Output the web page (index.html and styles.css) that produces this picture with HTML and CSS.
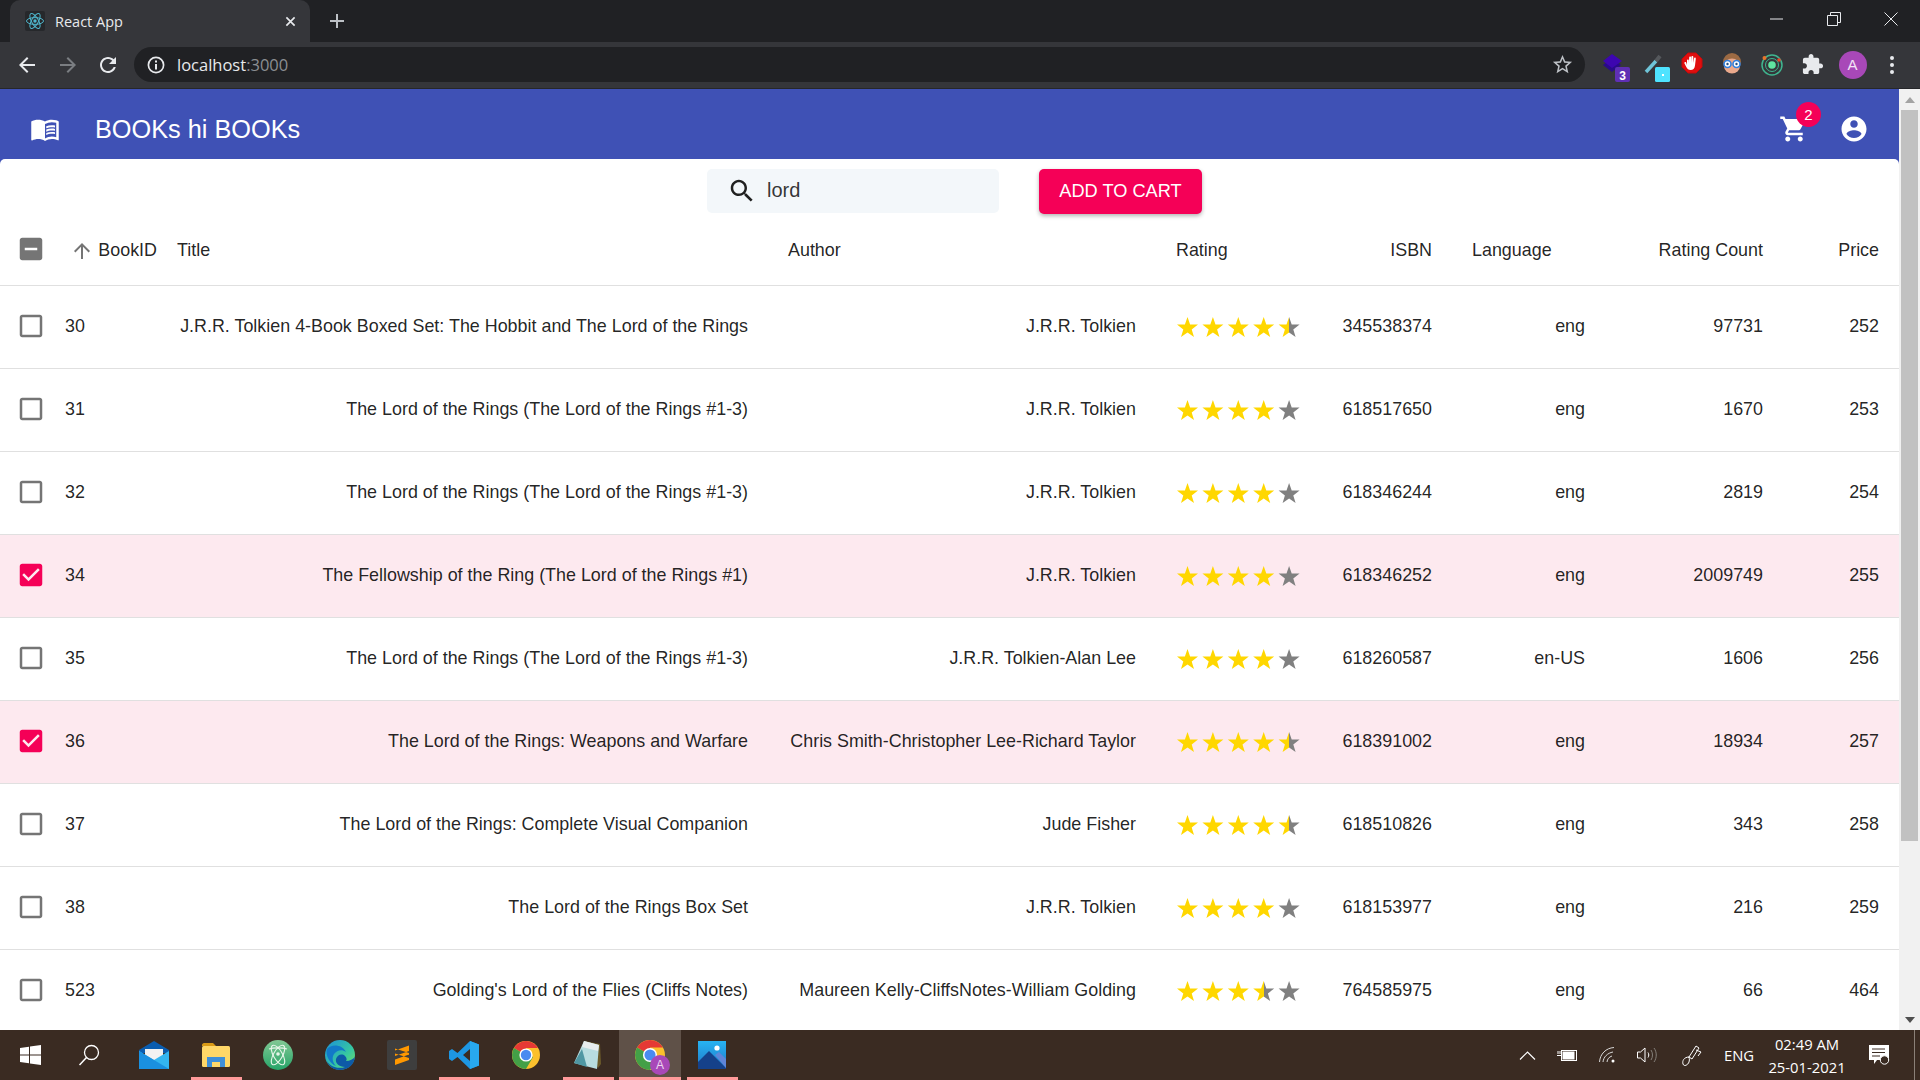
FILE: index.html
```html
<!DOCTYPE html>
<html lang="en">
<head>
  <meta charset="UTF-8" />
  <title>React App</title>
  <link rel="stylesheet" href="styles.css">
</head>
<body>
  <!-- shared svg pieces -->
  <svg class="svg-defs" aria-hidden="true">
    <defs>
      <linearGradient id="halfGold"><stop offset="50%" stop-color="#ffd700"/><stop offset="50%" stop-color="#808080"/></linearGradient>
      <polygon id="star" points="10.5,0 13.1,7.4 21,7.6 14.7,12.4 17,20 10.5,15.5 4,20 6.3,12.4 0,7.6 7.9,7.4"/>
      <g id="stars4">
        <use href="#star" fill="#ffd700"/><use href="#star" x="25.4" fill="#ffd700"/><use href="#star" x="50.8" fill="#ffd700"/><use href="#star" x="76.2" fill="#ffd700"/><use href="#star" x="101.6" fill="#808080"/>
      </g>
      <g id="stars45">
        <use href="#star" fill="#ffd700"/><use href="#star" x="25.4" fill="#ffd700"/><use href="#star" x="50.8" fill="#ffd700"/><use href="#star" x="76.2" fill="#ffd700"/><use href="#star" x="101.6" fill="url(#halfGold)"/>
      </g>
      <g id="stars35">
        <use href="#star" fill="#ffd700"/><use href="#star" x="25.4" fill="#ffd700"/><use href="#star" x="50.8" fill="#ffd700"/><use href="#star" x="76.2" fill="url(#halfGold)"/><use href="#star" x="101.6" fill="#808080"/>
      </g>
      <path id="boxEmpty" d="M19 5v14H5V5h14m0-2H5c-1.1 0-2 .9-2 2v14c0 1.1.9 2 2 2h14c1.1 0 2-.9 2-2V5c0-1.1-.9-2-2-2z"/>
      <path id="boxChecked" d="M19 3H5c-1.11 0-2 .9-2 2v14c0 1.1.89 2 2 2h14c1.11 0 2-.9 2-2V5c0-1.1-.89-2-2-2zm-9 14l-5-5 1.41-1.41L10 14.17l7.59-7.59L19 8l-9 9z"/>
      <g id="chromeLogo">
        <circle cx="14" cy="14" r="14" fill="#fbc02d"/>
        <path d="M14 14 1.9 7A14 14 0 0 1 26.1 7H14z" fill="#e53935"/>
        <path d="M14 14 1.9 7A14 14 0 0 0 14 28l7-12z" fill="#43a047"/>
        <circle cx="14" cy="14" r="6.6" fill="#fff"/>
        <circle cx="14" cy="14" r="5.2" fill="#4a8bf0"/>
      </g>
    </defs>
  </svg>

  <!-- browser window top -->
  <div class="tab-strip">
    <div class="tab">
      <svg class="favicon" viewBox="0 0 20 20">
        <rect width="20" height="20" rx="2" fill="#26282b"/>
        <g fill="none" stroke="#4fb6cc" stroke-width="1">
          <ellipse cx="10" cy="10" rx="8.5" ry="3.4"/>
          <ellipse cx="10" cy="10" rx="8.5" ry="3.4" transform="rotate(60 10 10)"/>
          <ellipse cx="10" cy="10" rx="8.5" ry="3.4" transform="rotate(120 10 10)"/>
        </g>
        <circle cx="10" cy="10" r="1.7" fill="#4fb6cc"/>
      </svg>
      <span class="tab-title">React App</span>
      <svg class="tab-close" viewBox="0 0 12 12"><path d="M1.5 1.5l9 9M10.5 1.5l-9 9" stroke="#e8eaed" stroke-width="1.8"/></svg>
    </div>
    <svg class="new-tab" viewBox="0 0 16 16"><path d="M8 1v14M1 8h14" stroke="#bdc1c6" stroke-width="2"/></svg>
    <div class="window-controls">
      <div class="window-btn"><svg viewBox="0 0 14 14"><path d="M0 7h13" stroke="#e8eaed" stroke-width="1"/></svg></div>
      <div class="window-btn"><svg viewBox="0 0 14 14"><path d="M.5 3.5h10v10H.5zM3.5 3.5v-3h10v10h-3" fill="none" stroke="#e8eaed" stroke-width="1"/></svg></div>
      <div class="window-btn"><svg viewBox="0 0 14 14"><path d="M.5.5l13 13M13.5.5l-13 13" stroke="#e8eaed" stroke-width="1"/></svg></div>
    </div>
  </div>

  <div class="browser-bar">
    <div class="nav-btn"><svg viewBox="0 0 24 24"><path fill="#e8eaed" d="M20 11H7.83l5.59-5.59L12 4l-8 8 8 8 1.41-1.41L7.83 13H20v-2z"/></svg></div>
    <div class="nav-btn"><svg viewBox="0 0 24 24"><path fill="#7b7e82" d="M4 11h12.17l-5.59-5.59L12 4l8 8-8 8-1.41-1.41L16.17 13H4v-2z"/></svg></div>
    <div class="nav-btn"><svg viewBox="0 0 24 24"><path fill="#e8eaed" d="M17.65 6.35C16.2 4.9 14.21 4 12 4c-4.42 0-7.99 3.58-7.99 8s3.57 8 7.99 8c3.73 0 6.84-2.55 7.73-6h-2.08c-.82 2.33-3.04 4-5.65 4-3.31 0-6-2.69-6-6s2.69-6 6-6c1.66 0 3.14.69 4.22 1.78L13 11h7V4l-2.35 2.35z"/></svg></div>
    <div class="url-bar">
      <svg class="url-info" viewBox="0 0 18 18"><circle cx="9" cy="9" r="7.6" fill="none" stroke="#e8eaed" stroke-width="1.7"/><path d="M8 8h2v5.5H8zM8 4.6h2v2H8z" fill="#e8eaed"/></svg>
      <span class="url-host">localhost</span><span class="url-port">:3000</span>
      <svg class="url-star" viewBox="0 0 24 24"><path fill="#bdc1c6" d="M22 9.24l-7.19-.62L12 2 9.19 8.63 2 9.24l5.46 4.73L5.82 21 12 17.27 18.18 21l-1.64-7.03L22 9.24zM12 15.4l-3.76 2.27 1-4.28-3.32-2.88 4.38-.38L12 6.1l1.71 4.04 4.38.38-3.32 2.88 1 4.28L12 15.4z"/></svg>
    </div>
    <div class="ext-btn">
      <svg viewBox="0 0 40 40">
        <path d="M11 20l9-7 9 7-9 7z" fill="#2a0a8a"/>
        <path d="M11 16l9-7 10 7-10 7z" fill="#3d06b0"/>
        <rect x="23" y="22" width="15" height="15" rx="2" fill="#5f2fb5"/>
        <text x="30.5" y="34.5" class="ext-count">3</text>
      </svg>
    </div>
    <div class="ext-btn">
      <svg viewBox="0 0 40 40">
        <path d="M14 27l10-11" stroke="#6fc4d8" stroke-width="3.5"/>
        <path d="M24 16l4-5" stroke="#55585c" stroke-width="4"/>
        <rect x="23" y="22" width="15" height="15" rx="1.5" fill="#4fe3ff"/>
        <rect x="30" y="29" width="2" height="2" fill="#fff"/>
      </svg>
    </div>
    <div class="ext-btn">
      <svg viewBox="0 0 40 40">
        <polygon points="16,8 24,8 30,14 30,22 24,28 16,28 10,22 10,14" fill="#e00e0e" stroke="#c40a0a"/>
        <path d="M15 15.5c0-1.4 1.8-1.4 1.8 0V18l.4-5.5c0-1.4 1.9-1.4 1.9 0V18l.3-6c0-1.4 1.9-1.4 1.9 0v6l.7-4.5c.2-1.4 1.9-1.2 1.8.2l-.8 6.8c-.3 3-2 4.5-4.4 4.5-2.2 0-3.3-1-4.3-3l-1.8-3.5c-.6-1.2.9-2 1.7-1L15 20z" fill="#fff"/>
      </svg>
    </div>
    <div class="ext-btn">
      <svg viewBox="0 0 40 40">
        <circle cx="20" cy="17" r="9" fill="#9c6a43"/>
        <ellipse cx="20" cy="21" rx="8" ry="7.5" fill="#eba98c"/>
        <circle cx="15.5" cy="19" r="3.5" fill="#fff" stroke="#2f80e0" stroke-width="1.6"/>
        <circle cx="24.5" cy="19" r="3.5" fill="#fff" stroke="#2f80e0" stroke-width="1.6"/>
        <circle cx="15.5" cy="19" r="1.2" fill="#264f80"/>
        <circle cx="24.5" cy="19" r="1.2" fill="#264f80"/>
      </svg>
    </div>
    <div class="ext-btn">
      <svg viewBox="0 0 40 40">
        <circle cx="20" cy="20" r="10" fill="none" stroke="#3fb58f" stroke-width="1.5"/>
        <circle cx="20" cy="20" r="6.5" fill="none" stroke="#3fb58f" stroke-width="1"/>
        <circle cx="20" cy="20" r="3.8" fill="#5fe3a0"/>
        <circle cx="12.5" cy="13" r="2" fill="#e8742a"/>
        <circle cx="27" cy="15" r="1.8" fill="#e8442a"/>
      </svg>
    </div>
    <div class="ext-btn">
      <svg class="puzzle" viewBox="0 0 24 24"><path fill="#e8eaed" d="M20.5 11H19V7c0-1.1-.9-2-2-2h-4V3.5C13 2.12 11.88 1 10.5 1S8 2.12 8 3.5V5H4c-1.1 0-1.99.9-1.99 2v3.8H3.5c1.49 0 2.7 1.21 2.7 2.7s-1.21 2.7-2.7 2.7H2V20c0 1.1.9 2 2 2h3.8v-1.5c0-1.49 1.21-2.7 2.7-2.7 1.49 0 2.7 1.21 2.7 2.7V22H17c1.1 0 2-.9 2-2v-4h1.5c1.38 0 2.5-1.12 2.5-2.5S21.88 11 20.5 11z"/></svg>
    </div>
    <div class="ext-btn"><span class="avatar">A</span></div>
    <div class="ext-btn">
      <svg viewBox="0 0 40 40"><circle cx="20" cy="13" r="2" fill="#e8eaed"/><circle cx="20" cy="20" r="2" fill="#e8eaed"/><circle cx="20" cy="27" r="2" fill="#e8eaed"/></svg>
    </div>
  </div>

  <div class="viewport">
    <div class="page">
      <header class="app-bar">
        <svg class="icon-30" viewBox="0 0 24 24"><path fill="#fff" d="M21 5c-1.11-.35-2.33-.5-3.5-.5-1.95 0-4.05.4-5.5 1.5-1.45-1.1-3.55-1.5-5.5-1.5S2.45 4.9 1 6v14.65c0 .25.25.5.5.5.1 0 .15-.05.25-.05C3.1 20.45 5.05 20 6.5 20c1.95 0 4.05.4 5.5 1.5 1.35-.85 3.8-1.5 5.5-1.5 1.65 0 3.35.3 4.75 1.05.1.05.15.05.25.05.25 0 .5-.25.5-.5V6c-.6-.45-1.25-.75-2-1zm0 13.5c-1.1-.35-2.3-.5-3.5-.5-1.7 0-4.15.65-5.5 1.5V8c1.35-.85 3.8-1.5 5.5-1.5 1.2 0 2.4.15 3.5.5v11.5z"/><path fill="#fff" d="M17.5 10.5c.88 0 1.73.09 2.5.26V9.24c-.79-.15-1.64-.24-2.5-.24-1.7 0-3.24.29-4.5.83v1.66c1.13-.64 2.7-.99 4.5-.99zM13 12.49v1.66c1.13-.64 2.7-.99 4.5-.99.88 0 1.73.09 2.5.26V11.9c-.79-.15-1.64-.24-2.5-.24-1.7 0-3.24.3-4.5.83zM17.5 14.33c-1.7 0-3.24.29-4.5.83v1.66c1.13-.64 2.7-.99 4.5-.99.88 0 1.73.09 2.5.26v-1.52c-.79-.16-1.64-.24-2.5-.24z"/></svg>
        <h1 class="app-title">BOOKs hi BOOKs</h1>
        <div class="app-actions">
          <div class="cart">
            <svg class="icon-30" viewBox="0 0 24 24"><path fill="#fff" d="M7 18c-1.1 0-1.99.9-1.99 2S5.9 22 7 22s2-.9 2-2-.9-2-2-2zM1 2v2h2l3.6 7.59-1.35 2.45c-.16.28-.25.61-.25.96 0 1.1.9 2 2 2h12v-2H7.42c-.14 0-.25-.11-.25-.25l.03-.12.9-1.63h7.45c.75 0 1.41-.41 1.75-1.03l3.58-6.49c.08-.14.12-.31.12-.48 0-.55-.45-1-1-1H5.21l-.94-2H1zm16 16c-1.1 0-1.99.9-1.99 2s.89 2 1.99 2 2-.9 2-2-.9-2-2-2z"/></svg>
            <span class="cart-badge">2</span>
          </div>
          <svg class="icon-30" viewBox="0 0 24 24"><path fill="#fff" d="M12 2C6.48 2 2 6.48 2 12s4.48 10 10 10 10-4.48 10-10S17.52 2 12 2zm0 3c1.66 0 3 1.34 3 3s-1.34 3-3 3-3-1.34-3-3 1.34-3 3-3zm0 14.2c-2.5 0-4.71-1.28-6-3.22.03-1.99 4-3.08 6-3.08 1.99 0 5.97 1.09 6 3.08-1.29 1.94-3.5 3.22-6 3.22z"/></svg>
        </div>
      </header>

      <main class="panel">
        <div class="table-toolbar">
          <div class="search-box">
            <svg class="icon-30" viewBox="0 0 24 24"><path fill="#212121" d="M15.5 14h-.79l-.28-.27C15.41 12.59 16 11.11 16 9.5 16 5.91 13.09 3 9.5 3S3 5.91 3 9.5 5.91 16 9.5 16c1.61 0 3.09-.59 4.23-1.57l.27.28v.79l5 4.99L20.49 19l-4.99-5zm-6 0C7.01 14 5 11.99 5 9.5S7.01 5 9.5 5 14 7.01 14 9.5 11.99 14 9.5 14z"/></svg>
            <span class="search-text">lord</span>
          </div>
          <button class="add-btn">ADD TO CART</button>
        </div>

        <table class="books">
          <colgroup>
            <col class="col-check"><col class="col-id"><col class="col-title"><col class="col-author"><col class="col-rating"><col class="col-isbn"><col class="col-lang"><col class="col-count"><col class="col-price">
          </colgroup>
          <thead>
            <tr>
              <th class="cell-check"><svg class="box box-grey" viewBox="0 0 24 24"><path d="M19 3H5c-1.1 0-2 .9-2 2v14c0 1.1.9 2 2 2h14c1.1 0 2-.9 2-2V5c0-1.1-.9-2-2-2zm-2 10H7v-2h10v2z"/></svg></th>
              <th class="cell-id"><span class="sort-head"><svg class="sort-arrow" viewBox="0 0 24 24"><path fill="#757575" d="M4 12l1.41 1.41L11 7.83V20h2V7.83l5.58 5.59L20 12l-8-8-8 8z"/></svg>BookID</span></th>
              <th>Title</th>
              <th>Author</th>
              <th>Rating</th>
              <th class="right">ISBN</th>
              <th>Language</th>
              <th class="right">Rating Count</th>
              <th class="right">Price</th>
            </tr>
          </thead>
          <tbody>
            <tr>
              <td class="cell-check"><svg class="box box-grey" viewBox="0 0 24 24"><use href="#boxEmpty"/></svg></td>
              <td class="cell-id">30</td>
              <td class="right">J.R.R. Tolkien 4-Book Boxed Set: The Hobbit and The Lord of the Rings</td>
              <td class="right">J.R.R. Tolkien</td>
              <td><svg class="stars" viewBox="0 0 123 20"><use href="#stars45"/></svg></td>
              <td class="right">345538374</td><td class="right">eng</td><td class="right">97731</td><td class="right">252</td>
            </tr>
            <tr>
              <td class="cell-check"><svg class="box box-grey" viewBox="0 0 24 24"><use href="#boxEmpty"/></svg></td>
              <td class="cell-id">31</td>
              <td class="right">The Lord of the Rings (The Lord of the Rings #1-3)</td>
              <td class="right">J.R.R. Tolkien</td>
              <td><svg class="stars" viewBox="0 0 123 20"><use href="#stars4"/></svg></td>
              <td class="right">618517650</td><td class="right">eng</td><td class="right">1670</td><td class="right">253</td>
            </tr>
            <tr>
              <td class="cell-check"><svg class="box box-grey" viewBox="0 0 24 24"><use href="#boxEmpty"/></svg></td>
              <td class="cell-id">32</td>
              <td class="right">The Lord of the Rings (The Lord of the Rings #1-3)</td>
              <td class="right">J.R.R. Tolkien</td>
              <td><svg class="stars" viewBox="0 0 123 20"><use href="#stars4"/></svg></td>
              <td class="right">618346244</td><td class="right">eng</td><td class="right">2819</td><td class="right">254</td>
            </tr>
            <tr class="selected">
              <td class="cell-check"><svg class="box box-pink" viewBox="0 0 24 24"><use href="#boxChecked"/></svg></td>
              <td class="cell-id">34</td>
              <td class="right">The Fellowship of the Ring (The Lord of the Rings #1)</td>
              <td class="right">J.R.R. Tolkien</td>
              <td><svg class="stars" viewBox="0 0 123 20"><use href="#stars4"/></svg></td>
              <td class="right">618346252</td><td class="right">eng</td><td class="right">2009749</td><td class="right">255</td>
            </tr>
            <tr>
              <td class="cell-check"><svg class="box box-grey" viewBox="0 0 24 24"><use href="#boxEmpty"/></svg></td>
              <td class="cell-id">35</td>
              <td class="right">The Lord of the Rings (The Lord of the Rings #1-3)</td>
              <td class="right">J.R.R. Tolkien-Alan Lee</td>
              <td><svg class="stars" viewBox="0 0 123 20"><use href="#stars4"/></svg></td>
              <td class="right">618260587</td><td class="right">en-US</td><td class="right">1606</td><td class="right">256</td>
            </tr>
            <tr class="selected">
              <td class="cell-check"><svg class="box box-pink" viewBox="0 0 24 24"><use href="#boxChecked"/></svg></td>
              <td class="cell-id">36</td>
              <td class="right">The Lord of the Rings: Weapons and Warfare</td>
              <td class="right">Chris Smith-Christopher Lee-Richard Taylor</td>
              <td><svg class="stars" viewBox="0 0 123 20"><use href="#stars45"/></svg></td>
              <td class="right">618391002</td><td class="right">eng</td><td class="right">18934</td><td class="right">257</td>
            </tr>
            <tr>
              <td class="cell-check"><svg class="box box-grey" viewBox="0 0 24 24"><use href="#boxEmpty"/></svg></td>
              <td class="cell-id">37</td>
              <td class="right">The Lord of the Rings: Complete Visual Companion</td>
              <td class="right">Jude Fisher</td>
              <td><svg class="stars" viewBox="0 0 123 20"><use href="#stars45"/></svg></td>
              <td class="right">618510826</td><td class="right">eng</td><td class="right">343</td><td class="right">258</td>
            </tr>
            <tr>
              <td class="cell-check"><svg class="box box-grey" viewBox="0 0 24 24"><use href="#boxEmpty"/></svg></td>
              <td class="cell-id">38</td>
              <td class="right">The Lord of the Rings Box Set</td>
              <td class="right">J.R.R. Tolkien</td>
              <td><svg class="stars" viewBox="0 0 123 20"><use href="#stars4"/></svg></td>
              <td class="right">618153977</td><td class="right">eng</td><td class="right">216</td><td class="right">259</td>
            </tr>
            <tr>
              <td class="cell-check"><svg class="box box-grey" viewBox="0 0 24 24"><use href="#boxEmpty"/></svg></td>
              <td class="cell-id">523</td>
              <td class="right">Golding's Lord of the Flies (Cliffs Notes)</td>
              <td class="right">Maureen Kelly-CliffsNotes-William Golding</td>
              <td><svg class="stars" viewBox="0 0 123 20"><use href="#stars35"/></svg></td>
              <td class="right">764585975</td><td class="right">eng</td><td class="right">66</td><td class="right">464</td>
            </tr>
          </tbody>
        </table>
      </main>
    </div>

    <div class="scrollbar">
      <svg class="scroll-arrow" viewBox="0 0 10 6"><path d="M5 0l5 6H0z" fill="#a3a3a3"/></svg>
      <div class="scroll-thumb"></div>
      <svg class="scroll-arrow scroll-arrow-down" viewBox="0 0 10 6"><path d="M5 6l5-6H0z" fill="#505050"/></svg>
    </div>
  </div>

  <!-- windows taskbar -->
  <footer class="taskbar">
    <div class="task-start">
      <svg width="21" height="20" viewBox="0 0 21 20"><path fill="#fff" d="M0 3l9-1.3V9.5H0zM10 1.5L21 0v9.5H10zM0 10.5h9v7.8L0 17zM10 10.5h11V20l-11-1.5z"/></svg>
    </div>
    <div class="task-search">
      <svg width="22" height="22" viewBox="0 0 22 22"><circle cx="13.5" cy="8.5" r="7" fill="none" stroke="#fff" stroke-width="1.3"/><path d="M8.5 13.5L1.5 21" stroke="#fff" stroke-width="1.5"/></svg>
    </div>
    <div class="task-item">
      <svg width="30" height="28" viewBox="0 0 30 28">
        <path d="M0 9L15 0l15 9v3H0z" fill="#0a5db0"/>
        <path d="M6 8h18v8l-9 5-9-5z" fill="#f2f2f2"/>
        <path d="M0 10l15 9 15-9v18H0z" fill="#33b5f0"/>
        <path d="M0 28V10l15 9 15 9z" fill="#1a90e0"/>
      </svg>
    </div>
    <div class="task-item open">
      <svg width="28" height="24" viewBox="0 0 28 24">
        <path d="M0 2c0-1 1-2 2-2h9l3 3H0z" fill="#d99a16"/>
        <rect y="3" width="28" height="21" rx="1.5" fill="#ffd768"/>
        <path d="M5 24V14h18v10h-5v-5h-8v5z" fill="#3f8fd8"/>
      </svg>
    </div>
    <div class="task-item">
      <svg width="30" height="30" viewBox="0 0 30 30">
        <defs><linearGradient id="atomGreen" x1="0" y1="0" x2="0" y2="1"><stop offset="0" stop-color="#82c894"/><stop offset="1" stop-color="#25a468"/></linearGradient></defs>
        <circle cx="15" cy="15" r="15" fill="url(#atomGreen)"/>
        <g fill="none" stroke="#e8f6ea" stroke-width="1.1">
          <ellipse cx="15" cy="15" rx="4.5" ry="11" transform="rotate(-30 15 15)"/>
          <ellipse cx="15" cy="15" rx="4.5" ry="11" transform="rotate(30 15 15)"/>
          <path d="M6 9c4-1.5 14-1.5 18 0"/>
        </g>
        <circle cx="15" cy="14" r="1.8" fill="#e8f6ea"/>
      </svg>
    </div>
    <div class="task-item">
      <svg width="30" height="30" viewBox="0 0 30 30">
        <defs><linearGradient id="edgeTop" x1="0" y1="0" x2="1" y2="1"><stop offset="0" stop-color="#1b8fd8"/><stop offset=".6" stop-color="#37c8a0"/><stop offset="1" stop-color="#7fe05a"/></linearGradient></defs>
        <circle cx="15" cy="15" r="15" fill="url(#edgeTop)"/>
        <path d="M30 17c-1 8-7 13-15 13C7 30 1 24 0 15c0 10 12 15 20 12-6 0-10-4-9-8 1-4 6-6 9-3 2 2 2 4 1 5 4 0 7-2 9-4z" fill="#0d5aa7"/>
        <path d="M2 9c4-5 15-5 19 3-4-3-9-2-12 2-2 3-2 8 2 12C5 24 0 15 2 9z" fill="#1279c8"/>
      </svg>
    </div>
    <div class="task-item">
      <svg width="30" height="30" viewBox="0 0 30 30">
        <rect width="30" height="30" rx="2" fill="#3e3e3e"/>
        <path d="M8 10.5L22 5.5v5.5L8 16zM8 13.5L22 18v-5L8 8.5zM8 19.5L22 14.5V20L8 25z" fill="#ff9800"/>
      </svg>
    </div>
    <div class="task-item open">
      <svg width="30" height="30" viewBox="0 0 30 30">
        <path d="M21 1l9 3.5v21L21 29 8.5 17 3 21l-3-2v-8l3-2 5.5 4zm0 8l-7 6 7 6z" fill="#1d96e3" fill-rule="evenodd"/>
        <path d="M21 1l9 3.5v21L21 29z" fill="#28a8ee"/>
      </svg>
    </div>
    <div class="task-item">
      <svg width="28" height="28" viewBox="0 0 28 28"><use href="#chromeLogo"/></svg>
    </div>
    <div class="task-item open">
      <svg width="28" height="30" viewBox="0 0 28 30">
        <path d="M10 1l16 3 1 20-3 4z" fill="#6b5a2a"/>
        <path d="M10 1l15 4-2 24L0 23z" fill="#b8dde0"/>
        <path d="M10 1l15 4-1 6L8 7z" fill="#e8edee"/>
        <path d="M0 23L8 9l5 18z" fill="#4f97a3"/>
      </svg>
    </div>
    <div class="task-item active open">
      <span class="chrome-profile">
        <svg width="30" height="30" viewBox="0 0 28 28"><use href="#chromeLogo"/></svg>
        <span class="chrome-badge">A</span>
      </span>
    </div>
    <div class="task-item open">
      <svg width="28" height="28" viewBox="0 0 28 28">
        <defs><linearGradient id="photoSky" x1="0" y1="0" x2="0" y2="1"><stop offset="0" stop-color="#27b3f2"/><stop offset="1" stop-color="#1f78c8"/></linearGradient></defs>
        <rect width="28" height="28" fill="url(#photoSky)"/>
        <circle cx="19" cy="7" r="2.6" fill="#fff"/>
        <path d="M0 21L11 10l17 17v1H0z" fill="#15418a"/>
        <path d="M17 14l4-3 7 7v9z" fill="#5f85d8"/>
      </svg>
    </div>

    <div class="tray">
      <div class="tray-item"><svg width="17" height="9" viewBox="0 0 17 9"><path d="M1 8.5L8.5 1 16 8.5" fill="none" stroke="#fff" stroke-width="1.2"/></svg></div>
      <div class="tray-item"><svg width="20" height="13" viewBox="0 0 20 13"><rect x="4.5" y="1.5" width="15" height="10" fill="none" stroke="#fff"/><rect x="5.5" y="2.5" width="12" height="8" fill="#fff"/><path d="M0 6.5h4M1 2v3M3 2v3" stroke="#fff"/></svg></div>
      <div class="tray-item"><svg width="16" height="16" viewBox="0 0 16 16"><g fill="none" stroke="#d8d8d8"><path d="M.5 15C1 7 7 1 15 .5"/><path d="M4 15c.5-5 4.5-9 10-10"/><path d="M8 15c.3-3 2-5 5-6"/></g><circle cx="14" cy="14" r="1.5" fill="#fff"/></svg></div>
      <div class="tray-item"><svg width="20" height="16" viewBox="0 0 20 16"><path d="M.5 5h3L8 1v14l-4.5-4h-3z" fill="none" stroke="#fff"/><path d="M11 5.5c1 1.5 1 3.500 0 5" fill="none" stroke="#fff"/><path d="M14 3c2 3 2 7 0 10M17 1c3 4 3 10 0 14" fill="none" stroke="#85807a"/></svg></div>
      <div class="tray-item tray-pen"><svg width="20" height="21" viewBox="0 0 20 21"><g fill="none" stroke="#fff"><path d="M14 1l3 2-7 11-3-2z"/><path d="M14 5l5 2-3 4"/><path d="M7 12c-5 0-7 4-6 7s5 1 6-2 0-5-1-5"/></g></svg></div>
      <div class="tray-item tray-lang">ENG</div>
      <div class="tray-item tray-clock"><span>02:49 AM</span><span>25-01-2021</span></div>
      <div class="tray-item tray-notify">
        <svg width="21" height="20" viewBox="0 0 21 20">
          <path d="M0 0h20v15H8l-3 4v-4H0z" fill="#fff"/>
          <path d="M3 4h13M3 7.5h13M3 11h8" stroke="#3a2b22"/>
          <circle cx="15.5" cy="15" r="4.2" fill="#3a2b22" stroke="#fff"/>
        </svg>
      </div>
      <div class="show-desktop"></div>
    </div>
  </footer>
</body>
</html>
```
FILE: styles.css
```css
* {
  margin: 0;
  padding: 0;
  box-sizing: border-box;
}

html, body {
  height: 100%;
  overflow: hidden;
}

body {
  display: flex;
  flex-direction: column;
  font-family: 'Liberation Sans', Arial, sans-serif;
  color: rgba(0, 0, 0, 0.87);
  background: #fff;
}

svg {
  display: block;
  flex: none;
}

.svg-defs {
  position: absolute;
  width: 0;
  height: 0;
}

/* browser chrome */
.tab-strip {
  display: flex;
  align-items: flex-end;
  flex: none;
  height: 42px;
  padding-left: 10px;
  background: #202124;
}

.tab {
  display: flex;
  align-items: center;
  width: 300px;
  height: 42px;
  padding: 0 14px 0 15px;
  border-radius: 10px 10px 0 0;
  background: #35363a;
}

.favicon {
  width: 20px;
  height: 20px;
}

.tab-title {
  margin-left: 10px;
  font-family: 'Open Sans', sans-serif;
  font-size: 14.5px;
  color: #e8eaed;
}

.tab-close {
  width: 11px;
  height: 11px;
  margin-left: auto;
}

.new-tab {
  width: 16px;
  height: 16px;
  margin: 0 0 13px 19px;
}

.window-controls {
  display: flex;
  align-self: flex-start;
  margin-left: auto;
  padding-right: 1px;
}

.window-btn {
  display: flex;
  align-items: center;
  justify-content: center;
  width: 57px;
  height: 38px;
}

.window-btn svg {
  width: 14px;
  height: 14px;
}

.browser-bar {
  display: flex;
  align-items: center;
  flex: none;
  height: 47px;
  padding: 0 8px 1px 7px;
  border-bottom: 1px solid #26272a;
  background: #35363a;
}

.nav-btn {
  display: flex;
  align-items: center;
  justify-content: center;
  width: 40px;
  margin-right: 1px;
}

.nav-btn:nth-child(3) svg {
  margin-left: -2px;
}

.nav-btn svg {
  width: 24px;
  height: 24px;
}

.url-bar {
  display: flex;
  align-items: center;
  flex: 1;
  height: 35px;
  margin: 0 7px 0 4px;
  padding: 0 11px 0 13px;
  border-radius: 18px;
  background: #202124;
  font-family: 'Open Sans', sans-serif;
  font-size: 16.5px;
}

.url-info {
  width: 18px;
  height: 18px;
  margin-right: 12px;
}

.url-host {
  color: #e8eaed;
}

.url-port {
  color: #8b8e92;
}

.url-star {
  width: 23px;
  height: 23px;
  margin-left: auto;
}

.ext-btn {
  display: flex;
  align-items: center;
  justify-content: center;
  width: 40px;
  height: 40px;
}

.ext-btn svg {
  width: 40px;
  height: 40px;
}

.ext-btn .puzzle {
  width: 23px;
  height: 23px;
}

.ext-count {
  font: bold 12px 'Liberation Sans', sans-serif;
  text-anchor: middle;
  fill: #fff;
}

.avatar {
  display: flex;
  align-items: center;
  justify-content: center;
  width: 28px;
  height: 28px;
  margin-left: 1px;
  border-radius: 50%;
  background: #a848b8;
  color: #f3e3f6;
  font-size: 15px;
}

/* page area */
.viewport {
  display: flex;
  flex: 1;
  min-height: 0;
}

.page {
  display: flex;
  flex-direction: column;
  flex: 1;
  min-width: 0;
  overflow: hidden;
  background: #3f51b5;
}

.app-bar {
  display: flex;
  align-items: center;
  flex: none;
  height: 70px;
  padding: 10px 30px 0;
  color: #fff;
}

.icon-30 {
  width: 30px;
  height: 30px;
}

.app-title {
  margin-left: 35px;
  font-size: 25.3px;
  font-weight: 400;
}

.app-actions {
  display: flex;
  gap: 30px;
  margin-left: auto;
}

.cart {
  position: relative;
}

.cart-badge {
  position: absolute;
  top: -12px;
  left: 17px;
  width: 25px;
  height: 25px;
  border-radius: 50%;
  background: #f50057;
  font-size: 15px;
  line-height: 25px;
  text-align: center;
}

.panel {
  flex: 1;
  min-height: 0;
  border-radius: 5px 5px 0 0;
  overflow: hidden;
  background: #fff;
}

.table-toolbar {
  display: flex;
  justify-content: center;
  gap: 40px;
  height: 55px;
  padding: 10px 0 0 10px;
}

.search-box {
  display: flex;
  align-items: center;
  gap: 10px;
  width: 292px;
  height: 44px;
  padding: 0 0 1px 20px;
  border-radius: 5px;
  background: #f3f7fa;
}

.search-text {
  font-size: 20px;
  color: rgba(0, 0, 0, 0.8);
}

.add-btn {
  width: 163px;
  height: 45px;
  border: none;
  border-radius: 5px;
  background: #f50057;
  box-shadow: 0 2px 4px rgba(0, 0, 0, 0.3);
  color: #fff;
  font: 18.2px 'Liberation Sans', Arial, sans-serif;
}

/* table */
.books {
  width: 1899px;
  table-layout: fixed;
  border-spacing: 0;
  font-size: 17.9px;
}

.col-check { width: 45px; }
.col-id { width: 112px; }
.col-title { width: 611px; }
.col-author { width: 388px; }
.col-rating { width: 166px; }
.col-isbn { width: 130px; }
.col-lang { width: 153px; }
.col-count { width: 178px; }
.col-price { width: 116px; }

.books th,
.books td {
  padding: 0 20px;
  border-bottom: 1px solid #e0e0e0;
  text-align: left;
  font-weight: 400;
  white-space: nowrap;
}

.books th {
  height: 72px;
  padding-top: 2px;
}

.books td {
  height: 83px;
  padding-bottom: 2px;
}

.books .right {
  text-align: right;
}

.books .cell-check {
  padding: 0 0 2px 16px;
}

.books .cell-id {
  padding-left: 20px;
  padding-right: 0;
}

.box {
  width: 30px;
  height: 30px;
  fill: #757575;
}

.box-pink {
  fill: #f50057;
}

.sort-head {
  display: flex;
  align-items: center;
  justify-content: flex-end;
  gap: 4px;
}

.sort-arrow {
  width: 24px;
  height: 24px;
}

.stars {
  width: 123px;
  height: 20px;
  margin: 2px 0 0 1px;
}

.selected td {
  background: #fde9ef;
}

/* scrollbar */
.scrollbar {
  display: flex;
  flex-direction: column;
  align-items: center;
  flex: none;
  width: 21px;
  background: #f1f1f1;
}

.scroll-arrow {
  flex: none;
  width: 10px;
  height: 6px;
  margin-top: 8px;
}

.scroll-thumb {
  flex: none;
  width: 17px;
  height: 731px;
  margin-top: 7px;
  background: #c1c1c1;
}

.scroll-arrow-down {
  margin-top: auto;
  margin-bottom: 7px;
}

/* taskbar */
.taskbar {
  display: flex;
  flex: none;
  height: 50px;
  background: #3a2b22;
  color: #fff;
}

.task-start {
  display: flex;
  align-items: center;
  justify-content: center;
  width: 60px;
}

.task-search {
  display: flex;
  align-items: center;
  justify-content: center;
  width: 63px;
  padding-right: 5px;
}

.task-item {
  position: relative;
  display: flex;
  align-items: center;
  justify-content: center;
  width: 62px;
}

.task-item.open::after {
  content: '';
  position: absolute;
  left: 6px;
  right: 5px;
  bottom: 0;
  height: 3px;
  background: #ff9a9a;
}

.task-item.active {
  background: #5f5148;
}

.task-item.active::after {
  left: 0;
  right: 0;
}

.chrome-profile {
  position: relative;
}

.chrome-badge {
  position: absolute;
  right: -5px;
  bottom: -5px;
  width: 20px;
  height: 20px;
  border-radius: 50%;
  background: #a848b8;
  color: #ecd5f0;
  font-size: 12px;
  line-height: 20px;
  text-align: center;
}

.tray {
  display: flex;
  margin-left: auto;
  font-family: 'Open Sans', sans-serif;
  font-size: 14.8px;
}

.tray-item {
  display: flex;
  align-items: center;
  justify-content: center;
  width: 40px;
}

.tray-pen {
  width: 50px;
}

.tray-lang {
  width: 44px;
}

.tray-clock {
  flex-direction: column;
  gap: 3px;
  width: 92px;
  line-height: 20px;
}

.tray-notify {
  width: 52px;
}

.show-desktop {
  width: 15px;
  background: linear-gradient(#8a8078, #8a8078) 9px 0 / 1px 100% no-repeat;
}
```
